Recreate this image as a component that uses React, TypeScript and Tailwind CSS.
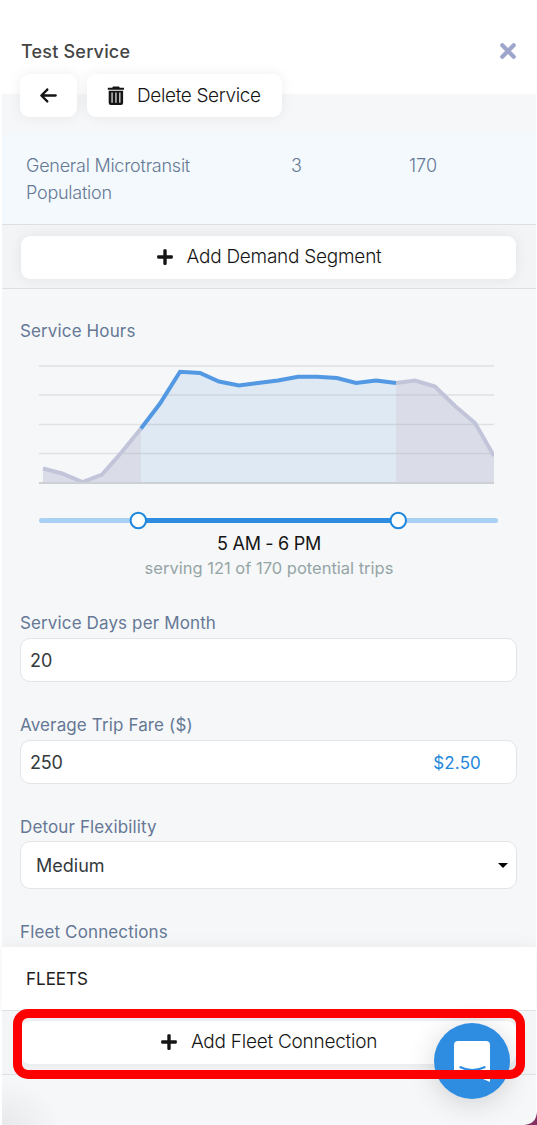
import type { ReactNode } from "react";
import { FaArrowLeft } from "react-icons/fa6";
import { FaPlus } from "react-icons/fa";

const curve: [number, number][] = [
  [43, 468.5], [62, 473.5], [82.5, 482], [102, 474.5], [121, 453], [141, 428.5],
  [160, 403.5], [180, 371.8], [200, 373], [219, 381.5], [239, 385.5], [258, 383],
  [278, 380.5], [298, 376.8], [317, 376.8], [337, 378], [356, 383], [376, 380.5],
  [396, 383], [415, 380.5], [435, 386.5], [455, 406], [475, 423], [494, 456],
];
const toPoints = (p: [number, number][]) => p.map(([x, y]) => `${x},${y}`).join(" ");

function Segment({ from, to, stroke, fill }: { from: number; to: number; stroke: string; fill: string }) {
  const part = curve.slice(from, to + 1);
  const x0 = part[0][0];
  const x1 = part[part.length - 1][0];
  return (
    <g>
      <polygon points={`${x0},483 ${toPoints(part)} ${x1},483`} fill={fill} />
      <polyline points={toPoints(part)} fill="none" stroke={stroke} strokeWidth="4" />
    </g>
  );
}

function HoursChart() {
  return (
    <svg className="ml-[37px] block h-[122px] w-[455px]" viewBox="39 363 455 122">
      {[366, 395, 424.5, 453.5].map((y) => (
        <line key={y} x1="39" x2="494" y1={y} y2={y} stroke="#dfe1e3" strokeWidth="1.4" />
      ))}
      <Segment from={0} to={5} stroke="#c2c5d9" fill="#9ba0c04c" />
      <Segment from={18} to={23} stroke="#c2c5d9" fill="#9ba0c04c" />
      <Segment from={5} to={18} stroke="#5398e2" fill="#3f82d01f" />
      <line x1="39" x2="494" y1="483" y2="483" stroke="#cdd0d4" strokeWidth="2" />
    </svg>
  );
}

function Trash() {
  return (
    <svg className="h-[20px] w-[18px] shrink-0" viewBox="0 0 18 20">
      <path fill="#151515" fillRule="evenodd" d="M6 0.5h6l.8 1.3H17v2H.8v-2h4.4zM1.7 4.8h14.4v12.1a2.1 2.1 0 0 1-2.1 2.1H3.8a2.1 2.1 0 0 1-2.1-2.1zM4.5 6.5v10.3h1.1V6.5zm3.9 0v10.3h1.1V6.5zm3.9 0v10.3h1.1V6.5z" />
    </svg>
  );
}

function Label({ children }: { children: ReactNode }) {
  return <div className="ml-[18px] h-[22px] whitespace-nowrap text-[17px] leading-[22px] tracking-[0.13px] text-[#657895]">{children}</div>;
}

function AddButton({ children }: { children: ReactNode }) {
  return (
    <button className="mx-[19px] flex h-[43px] w-[495px] items-center justify-center gap-[13px] rounded-[9px] bg-white text-[19px] font-light tracking-[-0.25px] text-[#151515] shadow-[0_0_14px_rgba(0,0,0,0.07)]">
      <FaPlus className="size-[18px] -translate-y-px" />
      <span className="whitespace-nowrap">{children}</span>
    </button>
  );
}

export default function App() {
  return (
    <div className="relative h-[1125px] w-[537px] overflow-hidden bg-white pl-[2px] font-['Inter','Liberation_Sans',sans-serif]">
      <div className="flex h-[1125px] w-[534px] flex-col bg-[#f5f7f9]">
        <header className="flex h-[94px] shrink-0 items-start justify-between bg-white pt-[40px] pr-[20px] pl-[19px]">
          <h1 className="text-[18px] leading-[24px] font-medium tracking-[0.2px] text-[#454545]">Test Service</h1>
          <svg className="mt-[3px] h-[16px] w-[16px]" viewBox="0 0 16 16">
            <path d="M2.3 2.3 13.7 13.7M13.7 2.3 2.3 13.7" stroke="#9fa6cb" strokeWidth="4.2" strokeLinecap="round" />
          </svg>
        </header>
        <div className="relative -mt-[20px] ml-[18px] flex h-[43px] shrink-0 gap-[10px]">
          <button className="flex w-[57px] items-center justify-center rounded-[9px] bg-white text-[#151515] shadow-[0_0_14px_rgba(0,0,0,0.07)]">
            <FaArrowLeft className="size-[19px]" />
          </button>
          <button className="flex w-[195px] items-center gap-[12px] rounded-[9px] bg-white pl-[20px] text-[19px] font-light tracking-[-0.36px] text-[#151515] shadow-[0_0_14px_rgba(0,0,0,0.07)]">
            <Trash />
            <span className="translate-y-px whitespace-nowrap">Delete Service</span>
          </button>
        </div>
        <div className="mt-[17px] flex h-[90px] shrink-0 bg-[#f3f9fc] pt-[18px] pl-[24px] text-[18px] leading-[27px] font-light tracking-[-0.25px] text-[#657895]">
          <div className="w-[265px]">General Microtransit<br />Population</div>
          <div className="w-[118px]">3</div>
          <div className="tracking-normal">170</div>
        </div>
        <div className="h-[65px] shrink-0 overflow-hidden border-y border-[#dddfe1] bg-[#f3f4f6] pt-[11px]">
          <AddButton>Add Demand Segment</AddButton>
        </div>
        <div className="mt-[31px]"><Label>Service Hours</Label></div>
        <div className="mt-[21px]"><HoursChart /></div>
        <svg className="mt-[26px] ml-[37px] block h-[19px] w-[459px] shrink-0" viewBox="0 0 459 19">
          <rect x="0" y="7" width="459" height="5" rx="2.5" fill="#a8d1f3" />
          <rect x="99" y="7" width="260" height="5" fill="#2e8de0" />
          <circle cx="99.3" cy="9.5" r="7.7" fill="white" stroke="#1e87dc" strokeWidth="2" />
          <circle cx="359.3" cy="9.5" r="7.7" fill="white" stroke="#1e87dc" strokeWidth="2" />
        </svg>
        <div className="mt-[2px] h-[24px] text-center text-[18px] leading-[24px] tracking-[-0.3px] text-[#151515]">5 AM - 6 PM</div>
        <div className="h-[24px] text-center text-[16.5px] leading-[24px] text-[#95a5a6]">serving 121 of 170 potential trips</div>
        <div className="mt-[32px]"><Label>Service Days per Month</Label></div>
        <div className="mt-[4px] ml-[18px] flex h-[44px] w-[497px] shrink-0 items-center rounded-[10px] border border-[#e2e4e5] bg-white px-[9px] text-[18px] text-[#343a3c]">20</div>
        <div className="mt-[32px]"><Label>Average Trip Fare ($)</Label></div>
        <div className="mt-[4px] ml-[18px] flex h-[44px] w-[497px] shrink-0 items-center justify-between rounded-[10px] border border-[#e2e4e5] bg-white pr-[35px] pl-[9px] text-[18px] tracking-[-0.2px] text-[#343a3c]">
          <span>250</span><span className="translate-y-[2px] text-[17px] tracking-[0.15px] text-[#1e87dc]">$2.50</span>
        </div>
        <div className="mt-[32px]"><Label>Detour Flexibility</Label></div>
        <div className="mt-[3px] ml-[18px] flex h-[48px] w-[497px] shrink-0 items-center justify-between rounded-[10px] border border-[#e2e4e5] bg-white pr-[8px] pl-[15px] text-[18px] text-[#343a3c]">
          <span>Medium</span>
          <svg className="h-[5px] w-[10px]" viewBox="0 0 10 5"><path d="M0 0h10L5 5z" fill="#050505" /></svg>
        </div>
        <div className="mt-[32px]"><Label>Fleet Connections</Label></div>
        <div className="mt-[4px] flex h-[63px] shrink-0 items-center bg-white pt-[2px] pl-[24px] text-[17px] text-[#222] shadow-[0_0_18px_rgba(0,0,0,0.06)]">FLEETS</div>
        <div className="relative h-[65px] shrink-0 border-y border-[#dfe2e4] bg-[#f4f5f7] pt-[10px]">
          <AddButton>Add Fleet Connection</AddButton>
        </div>
      </div>
      <div className="absolute bottom-0 left-[2px] h-[45px] w-[60px] bg-[radial-gradient(ellipse_at_bottom_left,rgba(0,0,0,0.06),transparent_70%)]" />
      <svg className="absolute right-0 bottom-0 h-[13px] w-[13px]" viewBox="0 0 12 12"><path d="M12 0v12H0C8 11 11 8 12 0z" fill="#873064" /></svg>
      <div className="absolute top-[1023px] left-[434px] size-[76px] rounded-full bg-[#2e8de0] shadow-[0_4px_28px_rgba(0,0,0,0.16)]">
        <svg className="h-full w-full" viewBox="0 0 76 76">
          <path d="M24 18h28a4 4 0 0 1 4 4v37l-7-3H24a4 4 0 0 1-4-4V22a4 4 0 0 1 4-4z" fill="white" />
          <path d="M26.5 44.3Q38 50 50.5 44.3" fill="none" stroke="#2e8de0" strokeWidth="2.3" strokeLinecap="round" />
        </svg>
      </div>
      <div className="absolute top-[1009px] left-[13px] h-[70px] w-[512px] rounded-[15px] border-[9px] border-[#ff0000]" />
    </div>
  );
}
